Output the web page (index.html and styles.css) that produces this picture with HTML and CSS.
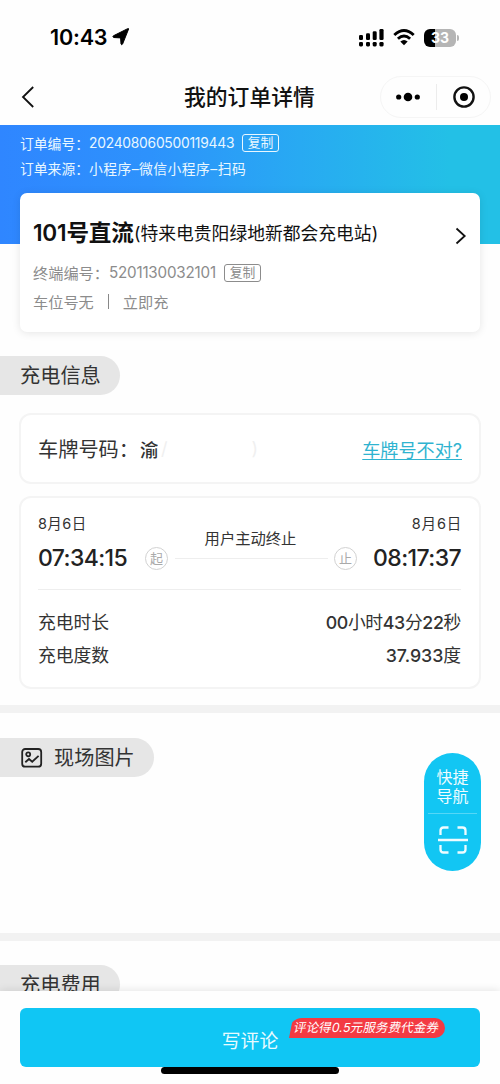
FILE: index.html
```html
<!DOCTYPE html>
<html lang="zh-CN">
<head>
<meta charset="utf-8">
<title>我的订单详情</title>
<link rel="stylesheet" href="styles.css">
</head>
<body>
<div class="app">
  <header class="status">
    <span class="clock">10:43</span>
    <svg class="locate" width="18" height="18" viewBox="0 0 18 18"><path d="M16.6 1 L10.6 16 Q9.7 17.6 9 16 L8.6 9.9 L1.6 9.5 Q.3 8.6 1.4 7.8 L15.6 .7 Q16.8 .2 16.6 1Z" stroke="#000" stroke-width="1" stroke-linejoin="round"/></svg>
    <svg class="signal" width="25" height="18" viewBox="0 0 25 18">
      <rect x="0" y="6" width="4" height="5" rx="1.3"/><rect x="7" y="4.3" width="4" height="6.7" rx="1.3"/><rect x="13.7" y="2.3" width="4" height="8.7" rx="1.3"/><rect x="20.4" y="0" width="4.2" height="11" rx="1.3"/>
      <rect x="0" y="13" width="4" height="4.4" rx="1.3"/><rect x="7" y="13" width="4" height="4.4" rx="1.3"/><rect x="13.7" y="13" width="4" height="4.4" rx="1.3"/><rect x="20.4" y="13" width="4.2" height="4.4" rx="1.3"/>
    </svg>
    <svg class="wifi" width="22" height="17" viewBox="0 0 22 17"><path d="M1.3 6 Q11 -2.8 20.7 6M4.9 9.8 Q11 4.2 17.1 9.8" fill="none" stroke="#000" stroke-width="2.9"/><path d="M7.3 12.4 Q11 9.4 14.7 12.4 L11 16.2Z"/></svg>
    <div class="battery"><span>33</span></div><i class="battery-tip"></i>
  </header>
  <nav class="nav">
    <svg class="back" width="14" height="22" viewBox="0 0 14 22"><path d="M12.2 1 L2 11 L12.2 21" fill="none" stroke="#111" stroke-width="1.8"/></svg>
    <h1>我的订单详情</h1>
    <div class="capsule">
      <svg width="24" height="10" viewBox="0 0 24 10"><circle cx="2.7" cy="5" r="2.6"/><circle cx="12" cy="5" r="4.3"/><circle cx="21.3" cy="5" r="2.6"/></svg>
      <i></i>
      <svg width="22" height="22" viewBox="0 0 22 22"><circle cx="11" cy="11" r="9.6" fill="none" stroke="#111" stroke-width="2.4"/><circle cx="11" cy="11" r="4"/></svg>
    </div>
  </nav>
  <main class="content">
    <section class="hero">
      <div class="hero-row"><span class="hl">订单编号：</span><span class="order-no">202408060500119443</span><span class="tag">复制</span></div>
      <div class="hero-row"><span class="hl">订单来源：</span><span class="source">小程序–微信小程序–扫码</span></div>
    </section>
    <section class="station">
      <div class="station-name"><b>101号直流</b><span>(特来电贵阳绿地新都会充电站)</span>
        <svg width="12" height="18" viewBox="0 0 12 18"><path d="M1.5 1.5 L9.7 9 L1.5 16.5" fill="none" stroke="#111" stroke-width="1.8"/></svg></div>
      <div class="station-row"><span>终端编号：</span><span class="terminal-no">5201130032101</span><span class="tag">复制</span></div>
      <div class="station-row slot"><span>车位号无</span><i></i><span>立即充</span></div>
    </section>
    <h2 class="pill">充电信息</h2>
    <section class="box plate">
      <span class="plate-label">车牌号码：</span><b>渝</b><span class="masked"><i>/</i><i>)</i></span><a>车牌号不对?</a>
    </section>
    <section class="box session">
      <div class="times">
        <div class="moment"><span class="date">8月6日</span><span class="time">07:34:15</span></div>
        <span class="dot">起</span>
        <div class="track"><span>用户主动终止</span></div>
        <span class="dot">止</span>
        <div class="moment end"><span class="date">8月6日</span><span class="time">08:17:37</span></div>
      </div>
      <div class="fact"><span>充电时长</span><span class="duration"><b>00</b>小时<b>43</b>分<b>22</b>秒</span></div>
      <div class="fact"><span>充电度数</span><span class="energy"><b>37.933</b>度</span></div>
    </section>
    <div class="band"></div>
    <section class="photos">
      <h2 class="pill"><svg width="22" height="20" viewBox="0 0 22 20"><rect x="1.2" y="1" width="19" height="17.7" rx="3" /><circle cx="7.2" cy="6.3" r="2"/><path d="M4.3 14.2 L8 11 L11.2 13.7 L17.6 7.8"/></svg>现场图片</h2>
    </section>
    <div class="band"></div>
    <h2 class="pill fee">充电费用</h2>
  </main>
  <footer class="bottom">
    <div class="review">写评论<span class="coupon"><em>评论得0.5元服务费代金券</em></span></div>
    <i class="home"></i>
  </footer>
  <aside class="quick">
    <span>快捷<br>导航</span>
    <svg width="30" height="28" viewBox="0 0 30 28"><path d="M2.5 9 V4.5 Q2.5 1.5 5.5 1.5 H10.5 M19.5 1.5 H24.5 Q27.5 1.5 27.5 4.5 V9 M2.5 19 V23.5 Q2.5 26.5 5.5 26.5 H10.5 M19.5 26.5 H24.5 Q27.5 26.5 27.5 23.5 V19 M0 14 H30"/></svg>
  </aside>
</div>
</body>
</html>
```

FILE: styles.css
```css
* { box-sizing: border-box; }
body { margin: 0; background: #fefefe; font-family: Inter, "Noto Sans CJK SC", sans-serif; color: #333; }
h1, h2 { margin: 0; font-weight: 400; }
i, em { font-style: normal; }
span, b, a, h1, h2 { white-space: nowrap; }
.app { position: relative; width: 500px; height: 1084px; overflow: hidden; display: flex; flex-direction: column; }

.status { height: 75px; flex: none; display: flex; align-items: center; padding-left: 50px; color: #000; }
.clock { width: 62px; font-size: 21.6px; line-height: 75px; font-weight: 600; letter-spacing: -.2px; }
.locate { margin-top: -1px; }
.signal { margin-left: 229px; }
.wifi { margin-left: 9px; }
.battery { width: 32px; height: 18px; margin-left: 9px; border-radius: 6px; background: linear-gradient(90deg, #000 11px, #b5b5b5 11px); color: #fff; font-size: 14px; font-weight: 700; line-height: 18px; text-align: center; }
.battery-tip { width: 2px; height: 6px; margin-left: 1px; border-radius: 0 2px 2px 0; background: #b5b5b5; }

.nav { height: 50px; flex: none; display: flex; align-items: center; padding: 0 9px 6px 21px; }
.nav h1 { margin-left: 149px; font-size: 21.8px; line-height: 44px; font-weight: 500; color: #111; }
.nav .back { margin-top: -1px; }
.capsule { width: 111px; height: 42px; margin-left: auto; display: flex; align-items: center; padding: 0 15px; justify-content: space-between; border: 1px solid #f5f5f5; border-radius: 21px; }
.capsule i { width: 1px; height: 26px; background: #ececec; }

.content { height: 866px; flex: none; overflow: hidden; }
.hero { height: 119px; padding: 5px 20px; background: linear-gradient(90deg, #2f86ff 0%, #2d92fc 30%, #28aaf2 60%, #23c0e6 90%); color: #e9f7ff; }
.hero-row { height: 25.5px; display: flex; align-items: center; font-size: 13.8px; }
.hl { width: 69px; }
.order-no { width: 145px; letter-spacing: -.23px; }
.source { letter-spacing: .45px; }
.tag { width: 37px; height: 18px; margin-left: 8px; border: 1px solid currentColor; border-radius: 3px; font-size: 12.8px; line-height: 16px; text-align: center; }
.hero .tag { margin-top: 1px; }

.station { height: 139px; margin: -51px 20px 0; padding: 20px 13px; position: relative; background: #fff; border-radius: 7px; box-shadow: 0 1px 8px rgba(0,0,0,.1); }
.station-name { height: 38px; display: flex; align-items: center; color: #111; }
.station-name b { width: 101px; font-size: 22.6px; line-height: 36px; margin-top: 1px; font-weight: 600; letter-spacing: -.2px; }
.station-name span { font-size: 17.8px; }
.station-name svg { margin: 7px 0 0 auto; }
.station-row { height: 30px; margin-top: 6px; display: flex; align-items: center; font-size: 15.2px; color: #8c8c8c; }
.terminal-no { width: 107px; letter-spacing: -.2px; }
.station .tag { margin-left: 8px; margin-top: 1px; }
.slot { margin-top: -1px; }
.slot i { width: 1px; height: 15px; margin: 0 14px; background: #888; }

.pill { width: 120px; height: 39px; margin-top: 24px; padding-left: 20px; display: flex; align-items: center; background: #e6e6e6; border-radius: 0 20px 20px 0; font-size: 20.2px; line-height: 39px; color: #333; }
.box { margin: 18px 19px 0; padding: 0 19px 0 17px; border: 2px solid #f4f4f4; border-radius: 12px; background: #fff; }
.plate { height: 71px; display: flex; align-items: center; font-size: 20.2px; }
.plate-label { width: 102px; }
.plate b { width: 18px; font-size: 18.5px; font-weight: 500; overflow: hidden; }
.masked { width: 100px; display: flex; justify-content: space-between; padding-left: 3px; color: #f0f0f0; font-size: 18px; }
.plate a { margin-left: auto; margin-right: -2px; font-size: 18.1px; color: #2fb3d0; text-decoration: underline; text-underline-offset: 2px; text-decoration-thickness: 1px; }
.session { height: 193px; margin-top: 12px; padding-right: 18px; }
.times { height: 92px; display: flex; align-items: flex-end; padding-bottom: 15px; border-bottom: 1px solid #eee; margin-bottom: 15px; }
.moment { width: 90px; display: flex; flex-direction: column; }
.date { font-size: 14.5px; line-height: 22px; letter-spacing: .4px; }
.time { margin-top: 7px; font-size: 23px; line-height: 32px; font-weight: 500; letter-spacing: -.6px; color: #222; }
.dot { flex: none; width: 23px; height: 23px; margin: 0 0 4px 17px; border: 1.5px solid #d2d2d2; border-radius: 50%; font-size: 13px; line-height: 20px; text-align: center; color: #aaa; }
.track { width: 153px; margin: 0 -11px 15px 7px; padding-bottom: 7px; border-bottom: 1px solid #eee; text-align: center; font-size: 15.3px; line-height: 24px; }
.track span { margin-right: 2px; }
.end { width: auto; margin-left: auto; align-items: flex-end; }
.end .date { letter-spacing: .8px; margin-right: -1px; }
.fact { height: 32.5px; display: flex; align-items: center; justify-content: space-between; font-size: 17.8px; }
.fact b { font-weight: 500; }
.duration { letter-spacing: -.35px; }
.energy { letter-spacing: -.05px; }
.band { height: 8px; margin-top: 16px; background: #f2f2f2; }
.photos { height: 204px; padding-top: 1px; }
.photos .pill { width: 154px; }
.pill svg { margin: 0 11px 0 1px; fill: none; stroke: #222; stroke-width: 1.8; }

.bottom { position: relative; height: 93px; flex: none; padding: 17px 20px 0; background: #fefefe; box-shadow: 0 -1px 8px rgba(0,0,0,.1); }
.review { position: relative; height: 59px; padding-top: 7px; border-radius: 6px; background: #10c6f4; color: #e8fbff; font-size: 18.8px; line-height: 53px; text-align: center; }
.coupon { position: absolute; left: 269px; top: 10px; width: 156px; height: 20px; border-radius: 13px 10px 10px 0; background: #f33a43; clip-path: polygon(4px 0, 100% 0, 100% 100%, 0 100%); color: #fff; font-size: 12.5px; line-height: 19px; text-align: left; }
.coupon em { display: block; padding-left: 5px; letter-spacing: .12px; transform: skewX(-12deg); }
.home { display: block; width: 178px; height: 7px; margin: 0 auto; border-radius: 4px; background: #000; }

.quick { position: absolute; left: 424px; top: 753px; width: 57px; height: 118px; border-radius: 29px; background: #12c6f3; color: #effcff; text-align: center; font-size: 16px; line-height: 19px; }
.quick span { display: block; height: 61px; margin: 0 4px; padding-top: 15px; border-bottom: 1px solid #55d7f7; }
.quick svg { margin-top: 12px; fill: none; stroke: #effcff; stroke-width: 2.3; }
```
